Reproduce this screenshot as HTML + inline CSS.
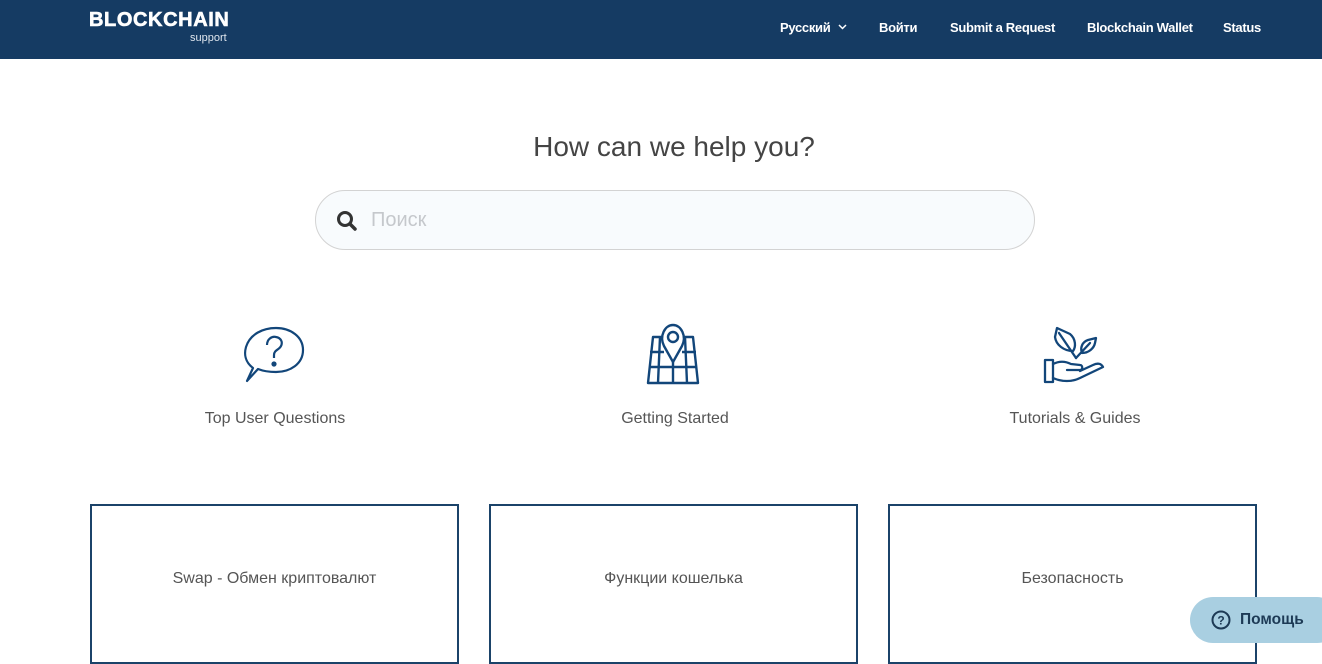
<!DOCTYPE html>
<html><head><meta charset="utf-8"><style>
*{margin:0;padding:0;box-sizing:border-box}
body{width:1322px;height:652px;overflow:hidden;background:#fff;font-family:"Liberation Sans",Arial,sans-serif;position:relative}
.hdr{height:59px;background:#153b63;position:relative;color:#fff}
.logo{position:absolute;left:89px;top:9px;font-weight:900;font-size:20px;letter-spacing:0.6px;-webkit-text-stroke:0.6px #fff}
.sup{position:absolute;left:190px;top:32px;font-size:11px;color:#dfe6ee}
.nav{position:absolute;top:20px;font-size:13px;font-weight:bold;letter-spacing:-0.3px}
h1{position:absolute;top:131px;left:13px;width:100%;text-align:center;font-weight:normal;font-size:28px;color:#444}
.search{position:absolute;left:315px;top:190px;width:720px;height:60px;border:1px solid #d3d3d3;border-radius:30px;background:#f8fbfd}
.search span{position:absolute;left:55px;top:18px;font-size:20px;color:#c5c8cc}
.cat{position:absolute;top:410px;width:400px;text-align:center;font-size:16px;color:#555}
.card{position:absolute;top:504px;width:369px;height:160px;border:2px solid #1b4369}
.card div{position:absolute;top:64px;width:100%;text-align:center;font-size:16px;color:#555}
.help{position:absolute;left:1190px;top:597px;width:150px;height:46px;border-radius:23px;background:#a9cfe1;color:#1d3a55;font-weight:bold;font-size:15.5px}
</style></head><body>
<div class="hdr">
<div class="logo">BLOCKCHAIN</div><div class="sup">support</div>
<div class="nav" style="left:780px">Русский <svg width="9" height="6" viewBox="0 0 9 6" style="margin-left:4px;vertical-align:2px"><path d="M1 1 L4.5 4.5 L8 1" fill="none" stroke="#fff" stroke-width="1.5"/></svg></div>
<div class="nav" style="left:879px">Войти</div>
<div class="nav" style="left:950px">Submit a Request</div>
<div class="nav" style="left:1087px">Blockchain Wallet</div>
<div class="nav" style="left:1223px">Status</div>
</div>
<h1>How can we help you?</h1>
<div class="search">
<svg style="position:absolute;left:20px;top:19px" width="22" height="22" viewBox="0 0 22 22"><circle cx="9" cy="9" r="6.5" fill="none" stroke="#333" stroke-width="3"/><line x1="14" y1="14" x2="19" y2="19" stroke="#333" stroke-width="3.5" stroke-linecap="round"/></svg>
<span>Поиск</span></div>

<svg style="position:absolute;left:243px;top:326px" width="62" height="58" viewBox="0 0 62 58" fill="none" stroke="#12467a" stroke-width="2.2"><path d="M10 42 C2 36 1 28 3 21 C7 8 20 2 33 2 C48 2 60 11 60 24 C60 38 47 46 33 46 C26 46 20 45 15 43 L4 55 Z" stroke-linejoin="round"/><path d="M24 19 C24 13 29 10 33 11 C38 12 40 16 38 20 C36 24 31 24 31 29 L31 32"/><circle cx="31" cy="38" r="1.5" fill="#12467a"/></svg>

<svg style="position:absolute;left:640px;top:320px" width="70" height="70" viewBox="0 0 70 70" fill="none" stroke="#12467a" stroke-width="2.4" stroke-linejoin="round">
<path d="M23 17 L13 17 L8 63 L58 63 L53 17 L43 17"/>
<path d="M10 32 L24 32 M42 32 L56 32 M9 47 L57 47 M20 17 L18 63 M45 17 L47 63 M33 42 L33 63"/>
<path d="M33 42 L24 26 C19 16 25 5 33 5 C41 5 47 16 42 26 Z"/>
<circle cx="33" cy="17" r="5"/></svg>

<svg style="position:absolute;left:1040px;top:320px" width="70" height="70" viewBox="0 0 70 70" fill="none" stroke="#12467a" stroke-width="2.3" stroke-linejoin="round" stroke-linecap="round">
<path d="M5 40 L13 40 L13 62 L5 62 Z"/>
<path d="M13 44 C19 41 25 41 31 44 L40 45 C43 45 43 50 40 50 L27 50"/>
<path d="M13 58 C22 62 32 62 40 58 L63 47 C61 43 57 43 53 45 L40 51"/>
<path d="M17 8 L30 14 C36 19 36 27 33 31 C24 31 16 25 15 17 Z M19 13 L36 38"/>
<path d="M56 18 L48 20 C42 22 40 28 42 33 C49 33 54 28 55 23 Z M36 38 L50 23"/></svg>

<div class="cat" style="left:75px">Top User Questions</div>
<div class="cat" style="left:475px">Getting Started</div>
<div class="cat" style="left:875px">Tutorials &amp; Guides</div>

<div class="card" style="left:90px"><div>Swap - Обмен криптовалют</div></div>
<div class="card" style="left:489px"><div>Функции кошелька</div></div>
<div class="card" style="left:888px"><div>Безопасность</div></div>

<div class="help">
<svg style="position:absolute;left:21px;top:13px" width="20" height="20" viewBox="0 0 20 20"><circle cx="10" cy="10" r="8.5" fill="none" stroke="#1d3a55" stroke-width="2"/><text x="10" y="14.5" font-size="12" font-weight="bold" text-anchor="middle" fill="#1d3a55" font-family="Liberation Sans">?</text></svg>
<span style="position:absolute;left:50px;top:14px">Помощь</span></div>
</body></html>
